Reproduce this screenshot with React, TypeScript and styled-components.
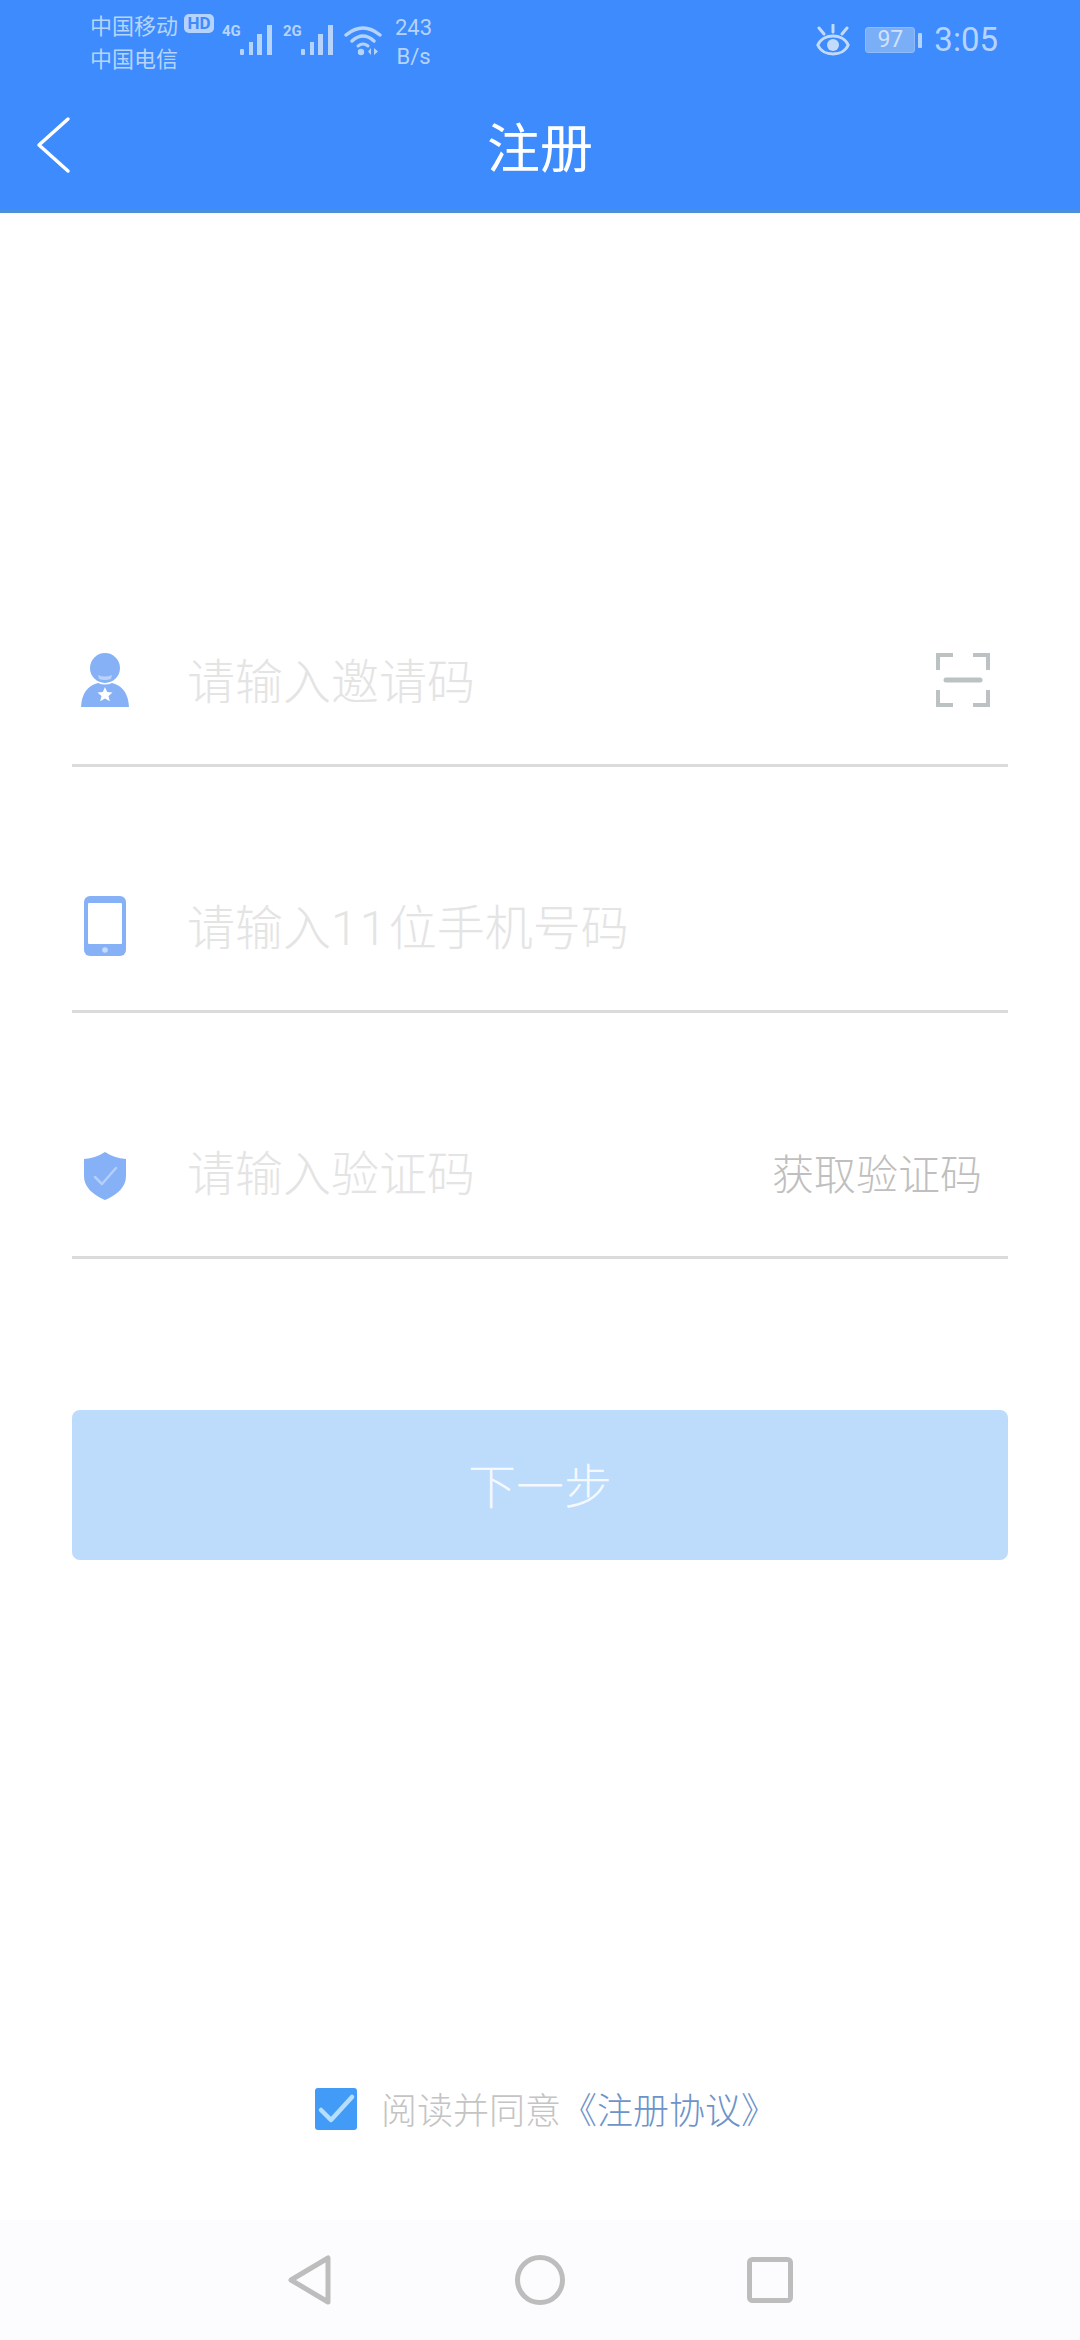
import React from "react";
import styled, { createGlobalStyle } from "styled-components";

const GlobalStyle = createGlobalStyle`
  html, body {
    margin: 0;
    padding: 0;
    background: #ffffff;
  }
  * {
    box-sizing: border-box;
  }
  body {
    font-family: "Roboto", "Noto Sans CJK SC", sans-serif;
  }
`;

const BackIcon = () => (
  <svg width="38" height="58" viewBox="0 0 38 58" fill="none">
    <path d="M34 3 L5 29 L34 55" stroke="#ffffff" strokeWidth="3.5" strokeLinecap="round" strokeLinejoin="round" />
  </svg>
);

const SignalIcon = () => (
  <svg width="33" height="32" viewBox="0 0 33 32" fill="#b6d4fb">
    <rect x="0" y="25" width="4" height="6" rx="1" />
    <rect x="9" y="18" width="4" height="13" />
    <rect x="17" y="10" width="5" height="21" />
    <rect x="27" y="1" width="5" height="30" />
  </svg>
);

const WifiIcon = () => (
  <svg width="38" height="32" viewBox="0 0 38 32" fill="none">
    <path d="M2 11 Q19 -3 36 11" stroke="#b6d4fb" strokeWidth="3.5" strokeLinecap="round" />
    <path d="M8 17 Q19 7 30 17" stroke="#b6d4fb" strokeWidth="3.5" strokeLinecap="round" />
    <path d="M14 22 Q19 18 24 22" stroke="#b6d4fb" strokeWidth="3" strokeLinecap="round" />
    <circle cx="17" cy="28" r="3.2" fill="#b6d4fb" />
    <path d="M27 24 L27 31 L24 27.5 Z M30 24 L30 31 L34 27.5 Z" fill="#b6d4fb" />
  </svg>
);

const EyeIcon = () => (
  <svg width="34" height="32" viewBox="0 0 34 32" fill="none">
    <path d="M1.8 21 C7 9 27 9 32.2 21 C27 33 7 33 1.8 21 Z" stroke="#c2dbfb" strokeWidth="3" />
    <circle cx="17" cy="21" r="6" fill="#c2dbfb" />
    <path d="M17 1 V8 M3 4 L8 10 M31 4 L26 10" stroke="#c2dbfb" strokeWidth="3" strokeLinecap="round" />
  </svg>
);

const InviteIcon = () => (
  <svg width="48" height="54" viewBox="0 0 48 54" fill="none">
    <circle cx="24" cy="15" r="15" fill="#86b1f6" />
    <path d="M17 22 Q24 25 31 22 L30 26 Q24 28 18 26 Z" fill="#b9d2f9" />
    <path d="M0 54 Q1 34 17 30 Q24 33 31 30 Q47 34 48 54 Z" fill="#86b1f6" />
    <path d="M24 34 L26.2 39 L31.5 39.5 L27.5 43 L28.8 48.2 L24 45.4 L19.2 48.2 L20.5 43 L16.5 39.5 L21.8 39 Z" fill="#ffffff" />
  </svg>
);

const PhoneIcon = () => (
  <svg width="42" height="60" viewBox="0 0 42 60" fill="none">
    <rect x="0" y="0" width="42" height="60" rx="6" fill="#86b1f6" />
    <rect x="4" y="7" width="34" height="41" rx="1" fill="#ffffff" />
    <circle cx="21" cy="54" r="2.8" fill="#c6dafb" />
  </svg>
);

const ShieldIcon = () => (
  <svg width="42" height="56" viewBox="0 -4 42 56" fill="none">
    <path d="M21 4 Q30 10 42 11 V28 Q42 43 21 52 Q0 43 0 28 V11 Q12 10 21 4 Z" fill="#86b1f6" />
    <path d="M11 29 L18 36 L32 20" stroke="#b3cffa" strokeWidth="2.5" strokeLinecap="round" strokeLinejoin="round" />
  </svg>
);

const ScanIcon = () => (
  <svg width="54" height="54" viewBox="0 0 54 54" fill="none" stroke="#bcc2c4" strokeWidth="4">
    <path d="M2 17 V2 H17 M37 2 H52 V17 M2 37 V52 H17 M37 52 H52 V37" />
    <path d="M10 27 H44" strokeWidth="5" strokeLinecap="round" />
  </svg>
);

const CheckIcon = () => (
  <svg width="42" height="42" viewBox="0 0 42 42" fill="none">
    <path d="M6 22 L16 32 L37 9" stroke="#b5e0fd" strokeWidth="4.5" strokeLinecap="round" strokeLinejoin="round" />
  </svg>
);

const NavBack = () => (
  <svg width="44" height="50" viewBox="0 0 44 50" fill="none">
    <path d="M40 3 V47 L3 25 Z" stroke="#bdbdbd" strokeWidth="5" strokeLinejoin="round" />
  </svg>
);

const NavHome = () => (
  <svg width="50" height="50" viewBox="0 0 50 50" fill="none">
    <circle cx="25" cy="25" r="22.5" stroke="#bdbdbd" strokeWidth="5" />
  </svg>
);

const NavRecent = () => (
  <svg width="46" height="46" viewBox="0 0 46 46" fill="none">
    <rect x="2.5" y="2.5" width="41" height="41" rx="3" stroke="#bdbdbd" strokeWidth="5" />
  </svg>
);

export default function App() {
  return (
    <>
      <GlobalStyle />
      <Page>
        <Header>
          <StatusBar>
            <StatusLeft>
              <Carriers>
                <CarrierLine>
                  中国移动<HdBadge>HD</HdBadge>
                </CarrierLine>
                <CarrierLine>中国电信</CarrierLine>
              </Carriers>
              <Network>
                <NetworkLabel>4G</NetworkLabel>
                <SignalIcon />
              </Network>
              <Network>
                <NetworkLabel>2G</NetworkLabel>
                <SignalIcon />
              </Network>
              <WifiIcon />
              <Speed>
                <span>243</span>
                <span>B/s</span>
              </Speed>
            </StatusLeft>
            <StatusRight>
              <EyeIcon />
              <Battery>
                <BatteryBody>97</BatteryBody>
                <BatteryCap />
              </Battery>
              <Clock>3:05</Clock>
            </StatusRight>
          </StatusBar>
          <TitleBar>
            <BackButton>
              <BackIcon />
            </BackButton>
            <Title>注册</Title>
          </TitleBar>
        </Header>

        <Main>
          <Form>
            <Field>
              <FieldIcon>
                <InviteIcon />
              </FieldIcon>
              <Placeholder>请输入邀请码</Placeholder>
              <ScanSlot>
                <ScanIcon />
              </ScanSlot>
            </Field>
            <Field>
              <FieldIcon>
                <PhoneIcon />
              </FieldIcon>
              <Placeholder>
                请输入<Digits>11</Digits>位手机号码
              </Placeholder>
            </Field>
            <Field>
              <FieldIcon>
                <ShieldIcon />
              </FieldIcon>
              <Placeholder>请输入验证码</Placeholder>
              <CodeLink>获取验证码</CodeLink>
            </Field>
          </Form>
          <NextButton>下一步</NextButton>
        </Main>

        <Agreement>
          <CheckBox>
            <CheckIcon />
          </CheckBox>
          <AgreementText>
            阅读并同意<AgreementLink>《注册协议》</AgreementLink>
          </AgreementText>
        </Agreement>

        <NavBar>
          <NavSlot>
            <NavBack />
          </NavSlot>
          <NavSlot>
            <NavHome />
          </NavSlot>
          <NavSlot>
            <NavRecent />
          </NavSlot>
        </NavBar>
      </Page>
    </>
  );
}

const Page = styled.div`
  width: 1080px;
  height: 2340px;
  display: flex;
  flex-direction: column;
  background: #ffffff;
  overflow: hidden;
`;

const Header = styled.header`
  height: 213px;
  background: #3d8bfd;
  border-bottom: 3px solid #4a90dc;
`;

const StatusBar = styled.div`
  height: 80px;
  padding: 0 82px 0 90px;
  display: flex;
  justify-content: space-between;
  align-items: center;
  color: #b6d4fb;
`;

const StatusLeft = styled.div`
  display: flex;
  align-items: center;
`;

const Carriers = styled.div`
  width: 132px;
  display: flex;
  flex-direction: column;
  gap: 5px;
`;

const CarrierLine = styled.div`
  height: 28px;
  display: flex;
  align-items: center;
  font-family: "Noto Sans CJK SC", sans-serif;
  font-size: 22px;
  line-height: 28px;
  white-space: nowrap;
`;

const HdBadge = styled.span`
  margin-left: 6px;
  width: 30px;
  height: 19px;
  border-radius: 5px;
  background: #b6d4fb;
  color: #3d8bfd;
  font-family: "Roboto", sans-serif;
  font-size: 17px;
  font-weight: 700;
  line-height: 19px;
  text-align: center;
`;

const Network = styled.div`
  display: flex;
  align-items: flex-end;
  margin-right: 10px;
  height: 32px;
`;

const NetworkLabel = styled.span`
  align-self: flex-start;
  width: 18px;
  font-family: "Roboto", sans-serif;
  font-size: 15px;
  font-weight: 700;
  line-height: 15px;
`;

const Speed = styled.div`
  margin-left: 13px;
  margin-top: 4px;
  display: flex;
  flex-direction: column;
  align-items: center;
  font-size: 22px;
  line-height: 29px;
`;

const StatusRight = styled.div`
  display: flex;
  align-items: center;
`;

const Battery = styled.div`
  margin-left: 15px;
  display: flex;
  align-items: center;
  gap: 3px;
`;

const BatteryBody = styled.div`
  width: 50px;
  height: 26px;
  border: 1.5px solid #8fbcf9;
  border-radius: 3px;
  background: #7aaef7;
  color: #cfe1fc;
  font-size: 23px;
  line-height: 23px;
  text-align: center;
`;

const BatteryCap = styled.div`
  width: 4px;
  height: 15px;
  border-radius: 1px;
  background: #b6d4fb;
`;

const Clock = styled.div`
  margin-left: 12px;
  font-size: 33px;
  line-height: 40px;
  color: #b6d4fb;
`;

const TitleBar = styled.div`
  height: 130px;
  padding: 0 34px;
  display: grid;
  grid-template-columns: 1fr auto 1fr;
  align-items: center;
`;

const BackButton = styled.div`
  grid-column: 1;
  display: flex;
  align-items: center;
`;

const Title = styled.h1`
  grid-column: 2;
  margin: 0;
  color: #ffffff;
  font-family: "Noto Sans CJK SC", sans-serif;
  font-size: 53px;
  font-weight: 400;
  line-height: 70px;
`;

const Main = styled.main`
  flex: 1;
  padding: 383px 72px 0;
  display: flex;
  flex-direction: column;
`;

const Form = styled.div`
  display: flex;
  flex-direction: column;
  gap: 75px;
`;

const Field = styled.div`
  height: 171px;
  display: flex;
  align-items: center;
  border-bottom: 3px solid #dbdbdb;
`;

const FieldIcon = styled.div`
  width: 66px;
  margin-right: 49px;
  display: flex;
  justify-content: center;
`;

const Placeholder = styled.span`
  flex: 1;
  margin-top: 5px;
  color: #e4e4e4;
  font-family: "Roboto", "Noto Sans CJK SC", sans-serif;
  font-size: 48px;
  font-weight: 300;
  line-height: 64px;
`;

const Digits = styled.span`
  letter-spacing: 2.2px;
`;

const ScanSlot = styled.div`
  margin-right: 18px;
  display: flex;
`;

const CodeLink = styled.span`
  margin-right: 26px;
  margin-bottom: 1px;
  color: #bfbfbf;
  font-family: "Noto Sans CJK SC", sans-serif;
  font-size: 42px;
  font-weight: 300;
  line-height: 56px;
`;

const NextButton = styled.div`
  margin-top: 151px;
  height: 150px;
  padding-bottom: 4px;
  border-radius: 8px;
  background: #bddbfb;
  color: #f4f9ff;
  display: flex;
  align-items: center;
  justify-content: center;
  font-family: "Noto Sans CJK SC", sans-serif;
  font-size: 48px;
  font-weight: 300;
`;

const Agreement = styled.div`
  height: 42px;
  margin-bottom: 90px;
  padding-left: 315px;
  display: flex;
  align-items: center;
`;

const CheckBox = styled.div`
  width: 42px;
  height: 42px;
  border-radius: 3px;
  background: #439bf8;
  display: flex;
`;

const AgreementText = styled.span`
  margin-left: 24px;
  margin-bottom: 3px;
  color: #c4c4c4;
  font-family: "Noto Sans CJK SC", sans-serif;
  font-size: 36px;
  font-weight: 300;
  line-height: 48px;
  white-space: nowrap;
`;

const AgreementLink = styled.span`
  color: #6d93c9;
`;

const NavBar = styled.nav`
  height: 120px;
  background: #fcfcfe;
  display: grid;
  grid-template-columns: repeat(3, 230px);
  justify-content: center;
  align-items: center;
`;

const NavSlot = styled.div`
  display: flex;
  justify-content: center;
`;
